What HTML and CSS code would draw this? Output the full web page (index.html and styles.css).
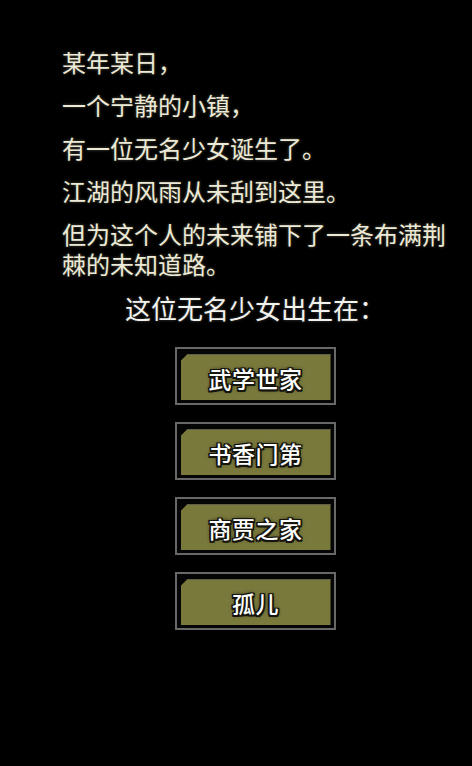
FILE: index.html
```html
<!DOCTYPE html>
<html lang="zh-CN">
<head>
    <meta charset="UTF-8">
    <meta name="viewport" content="width=device-width, initial-scale=1.0">
    <title>无名少女</title>
    <link rel="stylesheet" href="styles.css">
</head>
<body>
    <div class="story">
        <p>某年某日，</p>
        <p>一个宁静的小镇，</p>
        <p>有一位无名少女诞生了。</p>
        <p>江湖的风雨从未刮到这里。</p>
        <p>但为这个人的未来铺下了一条布满荆棘的未知道路。</p>
    </div>

    <div class="choices">
        <h2 class="question">这位无名少女出生在：</h2>
        <button class="choice-btn"><span class="choice-face">武学世家</span></button>
        <button class="choice-btn"><span class="choice-face">书香门第</span></button>
        <button class="choice-btn"><span class="choice-face">商贾之家</span></button>
        <button class="choice-btn"><span class="choice-face">孤儿</span></button>
    </div>
</body>
</html>
```

FILE: styles.css
```css
body {
    margin: 0;
    padding: 0;
    width: 472px;
    height: 766px;
    background: #000;
    font-family: "Noto Sans CJK SC", "Noto Sans", sans-serif;
    color: #ecead6;
    overflow: hidden;
}

.story {
    padding: 47px 20px 0 62px;
}

.story p {
    margin: 0 0 13px 0;
    font-size: 24px;
    line-height: 30px;
    text-shadow: 0 0 3px rgba(255, 250, 210, 0.35);
}

.choices {
    display: flex;
    flex-direction: column;
    align-items: center;
    padding-left: 38px;
    margin-top: 4px;
}

.question {
    margin: 0 0 23px 0;
    font-size: 26px;
    line-height: 32px;
    font-weight: 400;
    color: #f2f2ee;
    text-shadow: 0 0 3px rgba(255, 255, 255, 0.3);
}

.choice-btn {
    width: 161px;
    height: 58px;
    margin: 0 0 17px 0;
    padding: 5px 3px 3px 4px;
    box-sizing: border-box;
    background: #050505;
    border: 2px solid #686868;
    cursor: pointer;
    display: flex;
}

.choice-face {
    flex: 1;
    display: flex;
    align-items: center;
    justify-content: center;
    background: #7a793c;
    border-top: 1px solid #5f5f4a;
    clip-path: polygon(7px 0, 100% 0, 100% 100%, 0 100%, 0 7px);
    font-family: "Noto Sans CJK SC", sans-serif;
    font-size: 23px;
    font-weight: 500;
    color: #fff;
    letter-spacing: 0.5px;
    text-shadow:
        -1.5px -1.5px 0 #15150d, 1.5px -1.5px 0 #15150d,
        -1.5px 1.5px 0 #15150d, 1.5px 1.5px 0 #15150d,
        0 -1.5px 0 #15150d, 0 1.5px 0 #15150d,
        -1.5px 0 0 #15150d, 1.5px 0 0 #15150d,
        0 0 4px #000;
}
```
